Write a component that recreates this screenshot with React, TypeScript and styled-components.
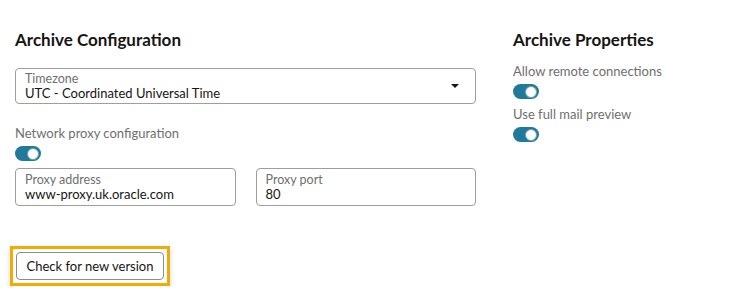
import styled, { createGlobalStyle } from 'styled-components';

const GlobalStyle = createGlobalStyle`
  body {
    margin: 0;
    background: #ffffff;
    font-family: Lato, "Noto Sans", sans-serif;
    color: #161513;
  }
`;

function Toggle() {
  return (
    <Track>
      <Knob />
    </Track>
  );
}

function App() {
  return (
    <>
      <GlobalStyle />
      <Page>
        <Main>
          <Heading>Archive Configuration</Heading>
          <Select>
            <FieldText>
              <FieldLabel>Timezone</FieldLabel>
              <FieldValue>UTC - Coordinated Universal Time</FieldValue>
            </FieldText>
            <Caret />
          </Select>
          <SwitchLabel>Network proxy configuration</SwitchLabel>
          <Toggle />
          <FieldRow>
            <Field>
              <FieldLabel>Proxy address</FieldLabel>
              <FieldValue>www-proxy.uk.oracle.com</FieldValue>
            </Field>
            <Field>
              <FieldLabel>Proxy port</FieldLabel>
              <FieldValue>80</FieldValue>
            </Field>
          </FieldRow>
          <Focus>
            <Button>Check for new version</Button>
          </Focus>
        </Main>
        <Side>
          <Heading $tight>Archive Properties</Heading>
          <SideLabel>Allow remote connections</SideLabel>
          <Toggle />
          <SideLabel $gap>Use full mail preview</SideLabel>
          <Toggle />
        </Side>
      </Page>
    </>
  );
}
export default App;

const Page = styled.div`
  display: flex;
  padding: 28px 0 0 15px;
  gap: 37px;
`;

const Main = styled.div`
  display: flex;
  flex-direction: column;
  width: 461px;
`;

const Side = styled.div`
  display: flex;
  flex-direction: column;
  width: 200px;
`;

const Heading = styled.h2<{ $tight?: boolean }>`
  margin: 0 0 ${(p) => (p.$tight ? '11px' : '16px')};
  font-size: 17px;
  line-height: 24px;
  font-weight: 700;
  color: #161513;
`;

const Select = styled.div`
  display: flex;
  align-items: center;
  justify-content: space-between;
  height: 36px;
  box-sizing: border-box;
  border: 1px solid #9e9e9e;
  border-radius: 4px;
  padding: 0 16px 0 9px;
`;

const FieldText = styled.div`
  display: flex;
  flex-direction: column;
`;

const FieldLabel = styled.div`
  font-size: 12.5px;
  line-height: 14px;
  color: #6f6f6f;
`;

const FieldValue = styled.div`
  font-size: 13px;
  line-height: 15px;
  color: #161513;
`;

const Caret = styled.div`
  width: 0;
  height: 0;
  border-left: 4px solid transparent;
  border-right: 4px solid transparent;
  border-top: 4px solid #161513;
`;

const SwitchLabel = styled.div`
  margin-top: 21px;
  font-size: 13px;
  line-height: 16px;
  color: #6f6f6f;
  margin-bottom: 5px;
`;

const SideLabel = styled.div<{ $gap?: boolean }>`
  font-size: 13px;
  line-height: 16px;
  color: #6f6f6f;
  margin-top: ${(p) => (p.$gap ? '7px' : '0')};
  margin-bottom: 5px;
`;

const Track = styled.div`
  display: flex;
  justify-content: flex-end;
  align-items: center;
  width: 26px;
  height: 15px;
  box-sizing: border-box;
  padding: 0 2px;
  border-radius: 8px;
  background: #227a9b;
`;

const Knob = styled.div`
  width: 12px;
  height: 12px;
  box-sizing: border-box;
  border-radius: 50%;
  background: #ffffff;
  border: 1px solid #6aa3b9;
`;

const FieldRow = styled.div`
  display: grid;
  grid-template-columns: 1fr 1fr;
  gap: 20px;
  margin-top: 7px;
`;

const Field = styled.div`
  display: flex;
  flex-direction: column;
  justify-content: center;
  height: 38px;
  box-sizing: border-box;
  border: 1px solid #9e9e9e;
  border-radius: 4px;
  padding: 0 9px;
`;

const Focus = styled.div`
  align-self: flex-start;
  margin: 40px 0 0 -5px;
  padding: 3px;
  border: 3px solid #f5aa00;
  background: #ffffff;
  box-shadow: 0 3px 5px rgba(0, 0, 0, 0.18);
`;

const Button = styled.button`
  display: block;
  width: 148px;
  height: 28px;
  border: 1px solid #8c8c8c;
  border-radius: 4px;
  background: #ffffff;
  font-family: Lato, "Noto Sans", sans-serif;
  font-size: 13px;
  color: #161513;
  padding: 0;
`;
